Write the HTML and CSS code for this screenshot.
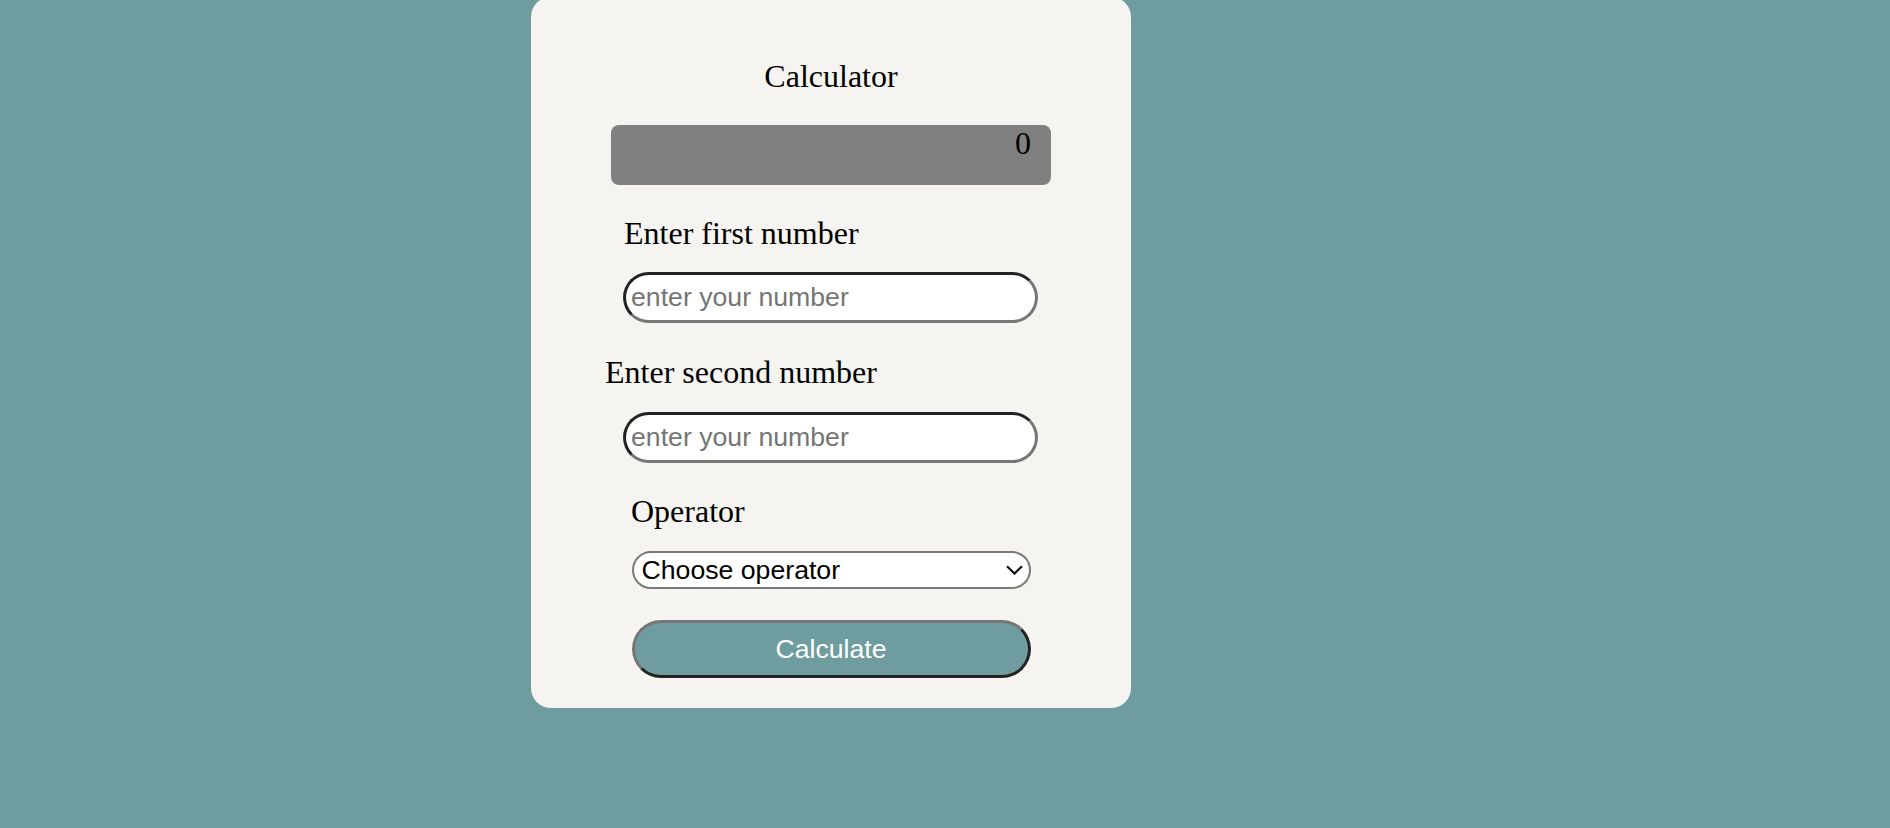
FILE: index.html
```
<!DOCTYPE html>
<html lang="en">
<head>
<meta charset="utf-8">
<title>Calculator</title>
<link rel="stylesheet" href="styles.css">
</head>
<body>
<main class="card">
  <h1 class="title">Calculator</h1>
  <div class="display">0</div>

  <label class="label label-first" for="num1">Enter first number</label>
  <input class="num-input" id="num1" type="number" placeholder="enter your number">

  <label class="label label-second" for="num2">Enter second number</label>
  <input class="num-input" id="num2" type="number" placeholder="enter your number">

  <label class="label label-op" for="op">Operator</label>
  <div class="select-wrap">
    <select class="op-select" id="op">
      <option>Choose operator</option>
      <option>+</option>
      <option>-</option>
      <option>*</option>
      <option>/</option>
    </select>
    <svg class="chevron" width="17" height="10" viewBox="0 0 17 10" aria-hidden="true">
      <polyline points="1,1.2 8.5,8.5 16,1.2" fill="none" stroke="#111" stroke-width="2.2"/>
    </svg>
  </div>

  <button class="calc-btn" type="button">Calculate</button>
</main>
</body>
</html>
```
FILE: styles.css
```
html, body {
  margin: 0;
  padding: 0;
}

body {
  background: #6f9c9f;
  min-height: 100vh;
  font-family: "Liberation Serif", "Times New Roman", serif;
}

.card {
  box-sizing: border-box;
  width: 600px;
  height: 711px;
  margin: -3px 0 0 531px;
  padding: 61px 0 30px 0;
  background: #f5f4f0;
  border-radius: 20px;
  display: flex;
  flex-direction: column;
  align-items: flex-start;
}

.title {
  align-self: center;
  margin: 0;
  font-size: 32px;
  font-weight: normal;
  line-height: 36px;
  color: #000;
}

.display {
  box-sizing: border-box;
  width: 440px;
  height: 60px;
  margin: 31px 0 0 80px;
  padding: 0 20px 0 0;
  background: #808080;
  border-radius: 8px;
  text-align: right;
  font-size: 32px;
  line-height: 36px;
  color: #000;
}

.label {
  display: block;
  font-size: 32px;
  line-height: 36px;
  color: #000;
}

.label-first {
  margin: 30px 0 0 93px;
}

.label-second {
  margin: 31px 0 0 74px;
}

.label-op {
  margin: 30px 0 0 100px;
}

.num-input {
  box-sizing: border-box;
  width: 415px;
  height: 51px;
  margin: 21px 0 0 92px;
  padding: 0 5px;
  border: 3px solid;
  border-color: #222 #767676 #767676 #222;
  border-radius: 26px;
  background: #fff;
  font-family: "Liberation Sans", Arial, sans-serif;
  font-size: 26.67px;
  color: #000;
  outline: none;
  -moz-appearance: textfield;
  appearance: textfield;
}

#num2 {
  margin-top: 22px;
}

.num-input::-webkit-outer-spin-button,
.num-input::-webkit-inner-spin-button {
  -webkit-appearance: none;
  margin: 0;
}

.num-input::placeholder {
  color: #757575;
}

.select-wrap {
  position: relative;
  margin: 22px 0 0 100.5px;
  width: 399px;
  height: 38px;
}

.op-select {
  box-sizing: border-box;
  width: 399px;
  height: 38px;
  margin: 0;
  padding: 0 30px 0 8px;
  border: 2px solid #7a7a7a;
  border-radius: 19px;
  background: #fff;
  font-family: "Liberation Sans", Arial, sans-serif;
  font-size: 26.67px;
  color: #000;
  -webkit-appearance: none;
  appearance: none;
  outline: none;
}

.chevron {
  position: absolute;
  right: 8px;
  top: 14px;
  pointer-events: none;
}

.calc-btn {
  box-sizing: border-box;
  width: 399px;
  height: 58px;
  margin: 31px 0 0 100.5px;
  padding: 0;
  border: 3px solid;
  border-color: #767676 #222 #222 #767676;
  border-radius: 29px;
  background: #6f9c9f;
  font-family: "Liberation Sans", Arial, sans-serif;
  font-size: 26.67px;
  color: #fff;
  cursor: pointer;
}
```
